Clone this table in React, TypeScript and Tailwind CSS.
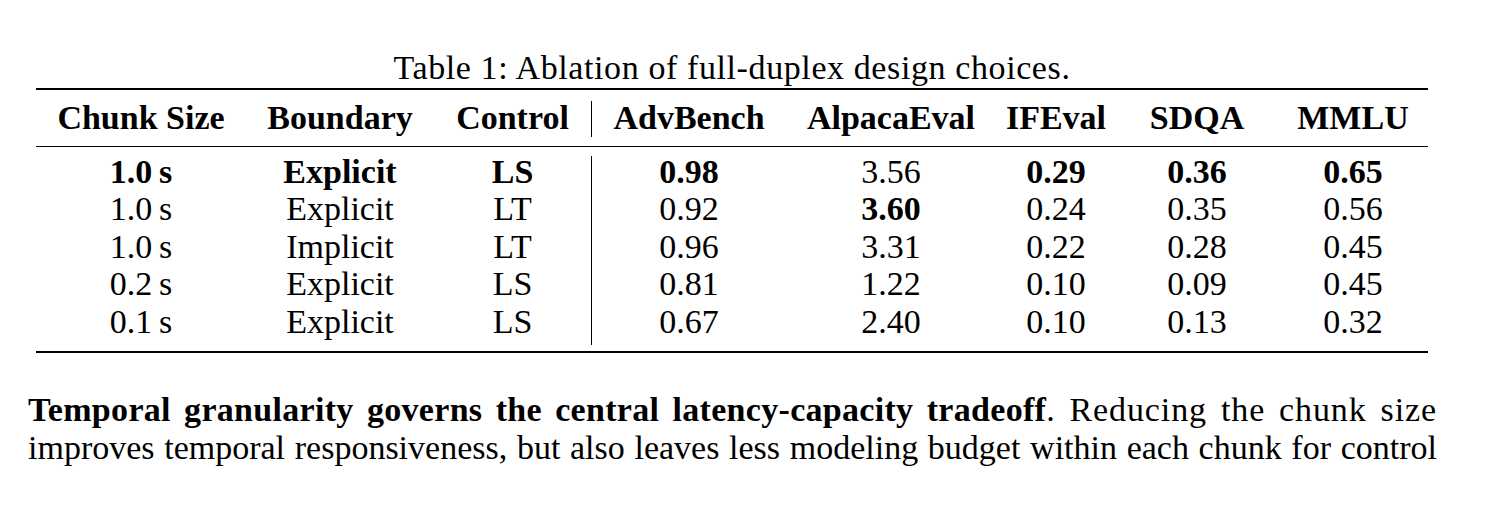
import React from 'react'

const leftCols = ['w-[210px]', 'w-[188px]', 'w-[157px]']
const rightCols = ['w-[194px]', 'w-[210px]', 'w-[120px]', 'w-[162px]', 'w-[150px]']

type Cell = { v: string; b?: boolean }

const rows: { left: Cell[]; right: Cell[] }[] = [
  {
    left: [{ v: '1.0\u2009s', b: true }, { v: 'Explicit', b: true }, { v: 'LS', b: true }],
    right: [{ v: '0.98', b: true }, { v: '3.56' }, { v: '0.29', b: true }, { v: '0.36', b: true }, { v: '0.65', b: true }],
  },
  {
    left: [{ v: '1.0\u2009s' }, { v: 'Explicit' }, { v: 'LT' }],
    right: [{ v: '0.92' }, { v: '3.60', b: true }, { v: '0.24' }, { v: '0.35' }, { v: '0.56' }],
  },
  {
    left: [{ v: '1.0\u2009s' }, { v: 'Implicit' }, { v: 'LT' }],
    right: [{ v: '0.96' }, { v: '3.31' }, { v: '0.22' }, { v: '0.28' }, { v: '0.45' }],
  },
  {
    left: [{ v: '0.2\u2009s' }, { v: 'Explicit' }, { v: 'LS' }],
    right: [{ v: '0.81' }, { v: '1.22' }, { v: '0.10' }, { v: '0.09' }, { v: '0.45' }],
  },
  {
    left: [{ v: '0.1\u2009s' }, { v: 'Explicit' }, { v: 'LS' }],
    right: [{ v: '0.67' }, { v: '2.40' }, { v: '0.10' }, { v: '0.13' }, { v: '0.32' }],
  },
]

const leftHead = ['Chunk Size', 'Boundary', 'Control']
const rightHead = ['AdvBench', 'AlpacaEval', 'IFEval', 'SDQA', 'MMLU']

export default function App() {
  return (
    <div className="w-[1486px] h-[508px] bg-white text-black font-['Liberation_Serif','Times_New_Roman',serif] text-[34px] leading-[38px] pt-[49px]">
      {/* table */}
      <div className="ml-[36px] w-[1392px]">
        <div className="text-center tracking-[0.6px]">Table 1: Ablation of full-duplex design choices.</div>
        <div className="mt-[1px] border-t-2 border-black" />

        {/* header */}
        <div className="flex h-[56px] font-bold">
          <div className="flex shrink-0">
            {leftHead.map((h, i) => (
              <div key={h} className={`${leftCols[i]} flex items-center justify-center`}>
                {h}
              </div>
            ))}
          </div>
          <div className="shrink-0 self-stretch border-l border-black mt-[11px] mb-[9px]" />
          <div className="flex shrink-0">
            {rightHead.map((h, i) => (
              <div key={h} className={`${rightCols[i]} flex items-center justify-center`}>
                {h}
              </div>
            ))}
          </div>
        </div>
        <div className="border-t border-black" />

        {/* body */}
        <div className="flex">
          <div className="shrink-0 pt-[6px] pb-[10px]">
            {rows.map((r, ri) => (
              <div key={ri} className="flex h-[37.5px]">
                {r.left.map((c, i) => (
                  <div key={i} className={`${leftCols[i]} flex items-center justify-center ${c.b ? 'font-bold' : ''}`}>
                    {c.v}
                  </div>
                ))}
              </div>
            ))}
          </div>
          <div className="shrink-0 self-stretch border-l border-black mt-[9px] mb-[6px]" />
          <div className="shrink-0 pt-[6px] pb-[10px]">
            {rows.map((r, ri) => (
              <div key={ri} className="flex h-[37.5px]">
                {r.right.map((c, i) => (
                  <div key={i} className={`${rightCols[i]} flex items-center justify-center ${c.b ? 'font-bold' : ''}`}>
                    {c.v}
                  </div>
                ))}
              </div>
            ))}
          </div>
        </div>
        <div className="border-t-2 border-black" />
      </div>

      {/* paragraph */}
      <div className="ml-[28px] w-[1409px] mt-[38px]">
        <div className="text-justify [text-align-last:justify] tracking-[0.9px]">
          <span className="font-bold tracking-[0.3px]">Temporal granularity governs the central latency-capacity tradeoff</span>. Reducing the chunk size
        </div>
        <div className="text-justify [text-align-last:justify]">
          improves temporal responsiveness, but also leaves less modeling budget within each chunk for control
        </div>
      </div>
    </div>
  )
}
